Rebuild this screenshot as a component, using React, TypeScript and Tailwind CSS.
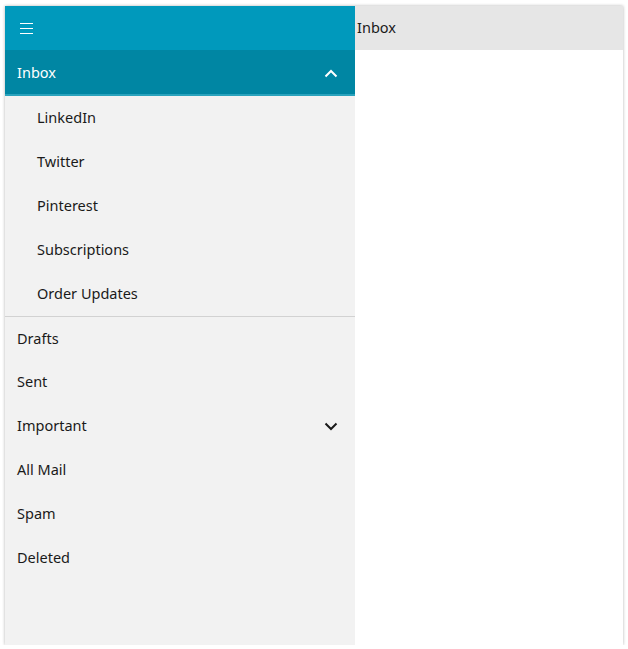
import { useState } from "react";

type Item = { name: string; children?: string[] };

const items: Item[] = [
  {
    name: "Inbox",
    children: ["LinkedIn", "Twitter", "Pinterest", "Subscriptions", "Order Updates"],
  },
  { name: "Drafts" },
  { name: "Sent" },
  { name: "Important", children: ["Starred", "Flagged"] },
  { name: "All Mail" },
  { name: "Spam" },
  { name: "Deleted" },
];

function Chevron({ up }: { up?: boolean }) {
  return (
    <svg width="14" height="9" viewBox="0 0 14 9">
      <path
        d={up ? "M1.5 7.5 L7 2 L12.5 7.5" : "M1.5 1.5 L7 7 L12.5 1.5"}
        fill="none"
        stroke="currentColor"
        strokeWidth="2"
      />
    </svg>
  );
}

export default function App() {
  const [selected, setSelected] = useState("Inbox");
  const [openMap, setOpenMap] = useState<Record<string, boolean>>({
    Inbox: true,
    Important: false,
  });

  return (
    <div
      className="ml-[5px] mt-[6px] flex h-[639px] w-[618px] text-[14.5px] text-[#1a1a1a] shadow-[0_0_3px_rgba(0,0,0,0.3)]"
      style={{ fontFamily: "'Noto Sans', sans-serif" }}
    >
      <aside className="flex w-[350px] flex-col bg-[#f2f2f2]">
        <div className="flex h-[44px] shrink-0 items-center bg-[#0099bc] pl-[15px]">
          <svg width="14" height="13" viewBox="0 0 14 13" className="text-white">
            <path d="M0 1.5 H13 M0 6.5 H13 M0 11.5 H13" stroke="currentColor" strokeWidth="1" />
          </svg>
        </div>
        {items.map((item, i) => {
          const open = openMap[item.name];
          const active = selected === item.name;
          return (
            <div key={item.name} className={i === 1 ? "border-t border-[#d2d2d2]" : ""}>
              <div
                onClick={() => {
                  setSelected(item.name);
                  if (item.children) setOpenMap({ ...openMap, [item.name]: !open });
                }}
                className={`flex cursor-pointer items-center justify-between pl-[12px] pr-[17px] ${
                  active
                    ? "h-[46px] border-b-2 border-[#2aa3bd] bg-[#0086a3] pt-[2px] text-white"
                    : i === 1
                    ? "h-[43px]"
                    : "h-[44px]"
                }`}
              >
                <span>{item.name}</span>
                {item.children && <Chevron up={open} />}
              </div>
              {item.children && open && (
                <div>
                  {item.children.map((c) => (
                    <div
                      key={c}
                      onClick={() => setSelected(c)}
                      className="flex h-[44px] cursor-pointer items-center pl-[32px]"
                    >
                      {c}
                    </div>
                  ))}
                </div>
              )}
            </div>
          );
        })}
      </aside>
      <main className="flex flex-1 flex-col bg-white">
        <div className="flex h-[44px] items-center bg-[#e6e6e6] pl-[2px]">{selected}</div>
      </main>
    </div>
  );
}
